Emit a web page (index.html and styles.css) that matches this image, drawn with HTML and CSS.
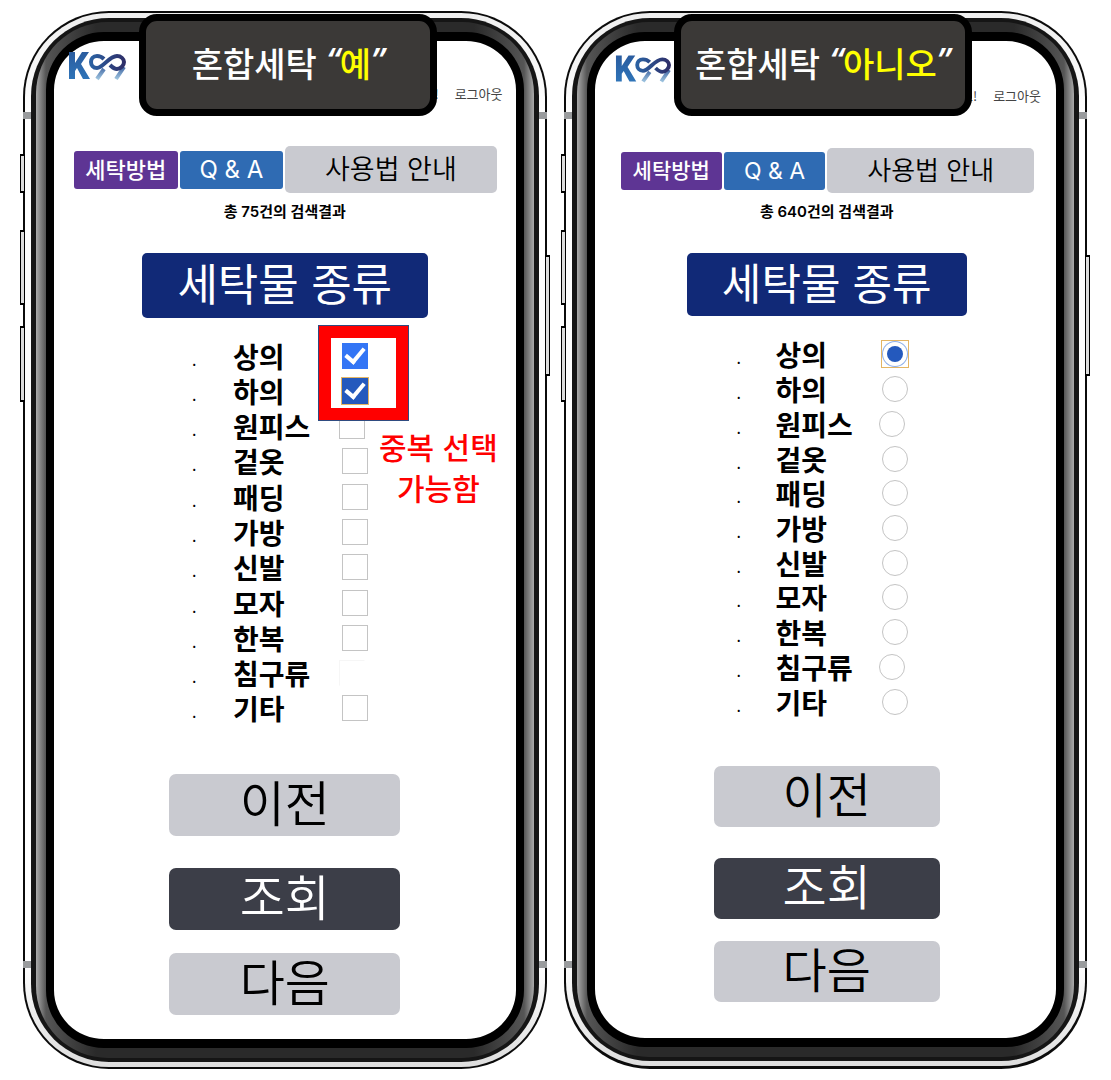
FILE: index.html
```html
<!DOCTYPE html>
<html lang="ko">
<head>
<meta charset="utf-8">
<title>세탁물 종류</title>
<link rel="stylesheet" href="styles.css">
</head>
<body>
<svg class="defs" aria-hidden="true">
  <defs>
    <linearGradient id="k" x1="0" y1="0" x2="0" y2="1"><stop offset="0" stop-color="#2a5c9f"/><stop offset="1" stop-color="#2f74b8"/></linearGradient>
    <linearGradient id="n" gradientUnits="userSpaceOnUse" x1="0" y1="17" x2="0" y2="31"><stop offset="0" stop-color="#3a5f9e"/><stop offset="1" stop-color="#a5cbe4"/></linearGradient>
    <linearGradient id="m" gradientUnits="userSpaceOnUse" x1="22" y1="0" x2="58" y2="0"><stop offset="0" stop-color="#2b62a3"/><stop offset="1" stop-color="#2e2c66"/></linearGradient>
    <symbol id="logo" viewBox="0 0 58 32">
      <path d="M1 3h6v11l7-11h7l-8 12 9 15h-7l-6-11-2 3v8H1z" fill="url(#k)"/>
      <path d="M36 20L29 30M56 18L48 30" fill="none" stroke="url(#n)" stroke-width="4"/>
      <path d="M36 10C34 8 32 7 29 7C25 7 23 10 23 13S25 19 29 19C35 19 41 7 49 7C53 7 56 10 56 13S53 20 49 20C46 20 44 18 42 16" fill="none" stroke="url(#m)" stroke-width="4"/>
    </symbol>
  </defs>
</svg>
<main class="board">
  <section class="phone">
    <i class="key key-mute"></i><i class="key key-up"></i><i class="key key-down"></i><i class="key key-power"></i>
    <i class="seam seam-tl"></i><i class="seam seam-tr"></i><i class="seam seam-bl"></i><i class="seam seam-br"></i>
    <div class="rim"><div class="band"><div class="bevel"><div class="screen">
      <header class="top">
        <svg class="logo" role="img" aria-label="K99"><use href="#logo"/></svg>
        <p class="account"><span>!</span><a href="#">로그아웃</a></p>
      </header>
      <nav class="tabs">
        <button class="tab how">세탁방법</button><button class="tab qa">Q &amp; A</button><button class="tab guide">사용법 안내</button>
      </nav>
      <p class="count">총 75건의 검색결과</p>
      <h1 class="title">세탁물 종류</h1>
      <ul class="kinds">
        <li><label for="a1">상의</label><input id="a1" type="checkbox" checked></li>
        <li><label for="a2">하의</label><input id="a2" class="focus" type="checkbox" checked></li>
        <li class="long"><label for="a3">원피스</label><input id="a3" type="checkbox"></li>
        <li><label for="a4">겉옷</label><input id="a4" type="checkbox"></li>
        <li><label for="a5">패딩</label><input id="a5" type="checkbox"></li>
        <li><label for="a6">가방</label><input id="a6" type="checkbox"></li>
        <li><label for="a7">신발</label><input id="a7" type="checkbox"></li>
        <li><label for="a8">모자</label><input id="a8" type="checkbox"></li>
        <li><label for="a9">한복</label><input id="a9" type="checkbox"></li>
        <li class="long"><label for="a10">침구류</label><input id="a10" class="faint" type="checkbox"></li>
        <li><label for="a11">기타</label><input id="a11" type="checkbox"></li>
      </ul>
      <div class="actions">
        <button class="action">이전</button>
        <button class="action search">조회</button>
        <button class="action">다음</button>
      </div>
      <div class="marker"></div>
      <p class="note">중복 선택<br>가능함</p>
    </div></div></div></div>
    <h2 class="badge">혼합세탁 <q><em>예</em></q></h2>
  </section>

  <section class="phone single">
    <i class="key key-mute"></i><i class="key key-up"></i><i class="key key-down"></i><i class="key key-power"></i>
    <i class="seam seam-tl"></i><i class="seam seam-tr"></i><i class="seam seam-bl"></i><i class="seam seam-br"></i>
    <div class="rim"><div class="band"><div class="bevel"><div class="screen">
      <header class="top">
        <svg class="logo" role="img" aria-label="K99"><use href="#logo"/></svg>
        <p class="account"><span>요!</span><a href="#">로그아웃</a></p>
      </header>
      <nav class="tabs">
        <button class="tab how">세탁방법</button><button class="tab qa">Q &amp; A</button><button class="tab guide">사용법 안내</button>
      </nav>
      <p class="count">총 640건의 검색결과</p>
      <h1 class="title">세탁물 종류</h1>
      <ul class="kinds">
        <li><label for="b1">상의</label><input id="b1" class="focus" type="radio" name="kind" checked></li>
        <li><label for="b2">하의</label><input id="b2" type="radio" name="kind"></li>
        <li class="long"><label for="b3">원피스</label><input id="b3" type="radio" name="kind"></li>
        <li><label for="b4">겉옷</label><input id="b4" type="radio" name="kind"></li>
        <li><label for="b5">패딩</label><input id="b5" type="radio" name="kind"></li>
        <li><label for="b6">가방</label><input id="b6" type="radio" name="kind"></li>
        <li><label for="b7">신발</label><input id="b7" type="radio" name="kind"></li>
        <li><label for="b8">모자</label><input id="b8" type="radio" name="kind"></li>
        <li><label for="b9">한복</label><input id="b9" type="radio" name="kind"></li>
        <li class="long"><label for="b10">침구류</label><input id="b10" type="radio" name="kind"></li>
        <li><label for="b11">기타</label><input id="b11" type="radio" name="kind"></li>
      </ul>
      <div class="actions">
        <button class="action">이전</button>
        <button class="action search">조회</button>
        <button class="action">다음</button>
      </div>
    </div></div></div></div>
    <h2 class="badge">혼합세탁 <q><em>아니오</em></q></h2>
  </section>
</main>
</body>
</html>
```

FILE: styles.css
```css
* { box-sizing: border-box; margin: 0; padding: 0; }

body {
  background: #fff;
  color: #000;
  font-family: "Noto Sans CJK KR", sans-serif;
}

button { border: 0; font-family: inherit; cursor: pointer; }

.defs { position: absolute; width: 0; height: 0; }

.board {
  display: grid;
  grid-template-columns: 1fr 1fr;
  gap: 17px;
  padding: 11px 24px 11px 23px;
  border-bottom: 1px solid #f5f5f5;
}

/* Handset body, from the outer edge inwards */
.phone {
  position: relative;
  padding: 2px;
  border-radius: 86px;
  background: #0b0b0b;
}
.rim {
  padding: 5px 6px;
  border-radius: 84px;
  background: linear-gradient(#eee, #fff 10%, #fff 90%, #ddd);
}
.band {
  padding: 4px 5px;
  border-radius: 78px;
  background: #151515;
}
.bevel {
  padding: 10px 10px;
  border-radius: 72px;
  background: linear-gradient(90deg, #aaa, #555 10px, #2a2a2a 60px, #2a2a2a calc(100% - 60px), #555 calc(100% - 10px), #aaa);
}
.screen {
  position: relative;
  border: solid #000;
  border-width: 9px 8px;
  border-radius: 58px;
  background: #fff;
  padding: 8px 0 24px;
}

.key {
  position: absolute;
  width: 5px;
  border: solid #000;
  border-width: 2px 1px;
  background: #ddd;
}
.key-mute { left: -3px; top: 143px; height: 39px; }
.key-up { left: -3px; top: 219px; height: 75px; }
.key-down { left: -3px; top: 315px; height: 76px; }
.key-power { right: -3px; top: 244px; height: 121px; }
.seam {
  position: absolute;
  z-index: 1;
  width: 8px;
  height: 7px;
  background: #999b9d;
}
.seam-tl { left: 0; top: 101px; }
.seam-tr { right: 0; top: 101px; }
.seam-bl { left: 0; bottom: 101px; }
.seam-br { right: 0; bottom: 101px; }

.badge {
  position: absolute;
  top: 3px;
  left: 116px;
  width: 298px;
  height: 102px;
  border: 7px solid #000;
  border-radius: 18px;
  background: #3b3937;
  color: #fff;
  font-size: 34px;
  font-weight: 500;
  line-height: 84px;
  text-align: center;
}
.badge q { quotes: "“" "”"; }
.badge q::before, .badge q::after {
  font-family: "Open Sans", sans-serif;
  font-size: 34px;
  font-style: italic;
  font-weight: 600;
  line-height: 40px;
  vertical-align: 4px;
}
.badge em { color: #ff0; font-style: normal; }

/* Screen content */
.top {
  display: flex;
  justify-content: space-between;
  align-items: flex-start;
  padding: 0 13px 0 14px;
}
.logo { width: 58px; height: 32px; }
.account {
  display: flex;
  gap: 16px;
  padding-top: 35px;
  font-size: 13px;
  line-height: 20px;
}
.account, .account a { color: #444; text-decoration: none; }

.tabs {
  display: flex;
  align-items: center;
  gap: 2px;
  margin-top: 42px;
  padding: 0 19px 0 20px;
}
.tab {
  flex: 104 1 0;
  height: 38px;
  padding-bottom: 3px;
  border-radius: 3px;
  color: #fff;
  font-size: 22px;
  font-weight: 500;
  line-height: 32px;
  white-space: nowrap;
}
.how { background: #5e3594; }
.qa {
  padding-bottom: 0;
  background: #2f6bb3;
  font-family: Inter, sans-serif;
  font-size: 24px;
  font-weight: 400;
}
.guide {
  flex-grow: 212;
  height: 47px;
  border-radius: 5px;
  background: #c9cad0;
  color: #000;
  font-size: 27px;
  font-weight: 350;
}

.count {
  margin-top: 7px;
  font-family: Inter, "Noto Sans CJK KR", sans-serif;
  font-size: 15px;
  font-weight: 600;
  line-height: 24px;
  text-align: center;
}
.title {
  width: 286px;
  margin: 29px auto 0;
  padding-bottom: 7px;
  border-radius: 5px;
  background: #112977;
  color: #fff;
  font-size: 44px;
  font-weight: 400;
  line-height: 58px;
  text-align: center;
}

.kinds {
  display: grid;
  grid-auto-rows: 1fr;
  min-height: 388px;
  margin: 20px 0 0 138px;
  list-style: none;
}
.kinds li {
  display: grid;
  grid-template-columns: 41px 109px auto;
  align-items: center;
  justify-content: start;
}
.kinds li.long { grid-template-columns: 41px 106px auto; }
.kinds li::before { content: "."; padding-top: 6px; font-size: 16px; line-height: 24px; }
.kinds label {
  font-size: 28px;
  font-weight: 700;
  line-height: 34px;
}
.kinds input {
  appearance: none;
  display: grid;
  place-items: center;
  width: 26px;
  height: 26px;
  border: 1px solid #c4c4c4;
  background: #fff;
}
.kinds input[type="checkbox"]:checked { border-color: #3375f5; background: #3375f5; }
.kinds input[type="checkbox"].focus { border-color: #2459bd; background: #2459bd; }
.kinds input.focus { outline: 1px solid #e3b565; }
.kinds input[type="checkbox"]:checked::before {
  content: "";
  width: 8px;
  height: 15px;
  margin-top: -4px;
  border: solid #fff;
  border-width: 0 4px 4px 0;
  rotate: 40deg;
}
.kinds input.faint { border-color: #f6f6f6 #fff #fff #f6f6f6; }
.kinds input[type="radio"] { border-radius: 50%; }
.kinds input[type="radio"].focus { border: 0; border-radius: 0; }
.kinds input[type="radio"]:checked::before {
  content: "";
  width: 16px;
  height: 16px;
  border-radius: 50%;
  background: #2459bd;
  box-shadow: 0 0 0 4px #fff, 0 0 0 5px #8fb0ea;
}

.actions {
  display: grid;
  justify-content: center;
  margin-top: 48px;
}
.action {
  width: 231px;
  padding-bottom: 8px;
  border-radius: 7px;
  background: #c9cad0;
  font-size: 49px;
  font-weight: 350;
  line-height: 54px;
}
.search { margin: 32px 0 23px; background: #3c3e48; color: #fff; }

/* Annotation over the list */
.marker {
  position: absolute;
  top: 284px;
  left: 264px;
  width: 91px;
  height: 96px;
  border: 13px solid #f00;
  outline: 1px solid #2f4b80;
  outline-offset: -1px;
}
.note {
  position: absolute;
  top: 385px;
  left: 325px;
  color: #f00;
  font-size: 30px;
  font-weight: 500;
  line-height: 41px;
  text-align: center;
}

/* Single-choice handset: the same page, slightly smaller */
.single .screen { padding: 8px 0 36px 3px; }
.single .badge { left: 110px; }
.single .top { padding: 3px 15px 0 17px; }
.single .logo { width: 56px; }
.single .account { padding-top: 34px; }
.single .tabs { margin-top: 42px; padding: 0 22px 0 23px; }
.single .tab { font-size: 21px; }
.single .tab.qa { font-size: 23px; }
.single .tab.guide { height: 45px; font-size: 26px; }
.single .title { width: 280px; line-height: 56px; font-size: 43px; }
.single .kinds { min-height: 382px; margin: 21px 0 0 139px; }
.single .kinds li { grid-template-columns: 39px 106px auto; }
.single .kinds li.long { grid-template-columns: 39px 103px auto; }
.single .actions { margin-top: 47px; }
.single .action { width: 226px; line-height: 53px; font-size: 48px; }
.single .search { margin: 31px 0 22px; }
```
